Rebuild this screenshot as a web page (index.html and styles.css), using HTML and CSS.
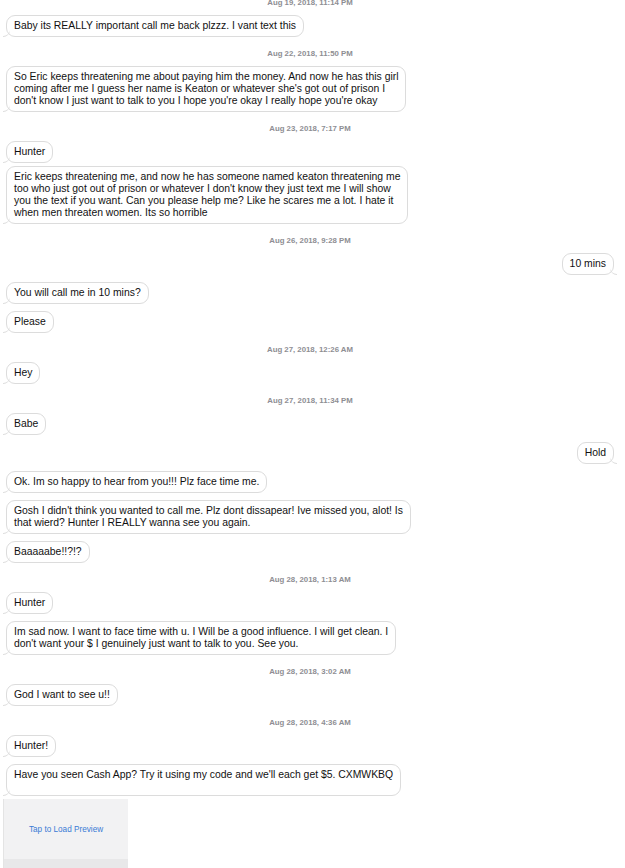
FILE: index.html
```html
<!DOCTYPE html>
<html lang="en">
<head>
    <meta charset="UTF-8">
    <meta name="viewport" content="width=device-width, initial-scale=1.0">
    <link rel="stylesheet" href="styles.css">
</head>
<body>
    <!-- Conversation -->
    <main class="chat">
        <div class="stamp">Aug 19, 2018, 11:14 PM</div>
        <div class="msg in">Baby its REALLY important call me back plzzz. I vant text this</div>

        <div class="stamp">Aug 22, 2018, 11:50 PM</div>
        <div class="msg in">So Eric keeps threatening me about paying him the money. And now he has this girl<br>coming after me I guess her name is Keaton or whatever she's got out of prison I<br>don't know I just want to talk to you I hope you're okay I really hope you're okay</div>

        <div class="stamp">Aug 23, 2018, 7:17 PM</div>
        <div class="msg in">Hunter</div>
        <div class="msg in tight">Eric keeps threatening me, and now he has someone named keaton threatening me<br>too who just got out of prison or whatever I don't know they just text me I will show<br>you the text if you want. Can you please help me? Like he scares me a lot. I hate it<br>when men threaten women. Its so horrible</div>

        <div class="stamp">Aug 26, 2018, 9:28 PM</div>
        <div class="msg out">10 mins</div>
        <div class="msg in">You will call me in 10 mins?</div>
        <div class="msg in">Please</div>

        <div class="stamp">Aug 27, 2018, 12:26 AM</div>
        <div class="msg in">Hey</div>

        <div class="stamp">Aug 27, 2018, 11:34 PM</div>
        <div class="msg in">Babe</div>
        <div class="msg out">Hold</div>
        <div class="msg in">Ok. Im so happy to hear from you!!! Plz face time me.</div>
        <div class="msg in">Gosh I didn't think you wanted to call me. Plz dont dissapear! Ive missed you, alot! Is<br>that wierd? Hunter I REALLY wanna see you again.</div>
        <div class="msg in">Baaaaabe!!?!?</div>

        <div class="stamp">Aug 28, 2018, 1:13 AM</div>
        <div class="msg in">Hunter</div>
        <div class="msg in">Im sad now. I want to face time with u. I Will be a good influence. I will get clean. I<br>don't want your $ I genuinely just want to talk to you. See you.</div>

        <div class="stamp">Aug 28, 2018, 3:02 AM</div>
        <div class="msg in">God I want to see u!!</div>

        <div class="stamp">Aug 28, 2018, 4:36 AM</div>
        <div class="msg in">Hunter!</div>
        <div class="msg in link">Have you seen Cash App? Try it using my code and we'll each get $5. CXMWKBQ</div>

        <!-- Link preview -->
        <div class="preview">
            <div class="preview-body">Tap to Load Preview</div>
            <div class="preview-foot"></div>
        </div>
    </main>
</body>
</html>
```

FILE: styles.css
```css
/* Reset */
* {
    margin: 0;
    padding: 0;
    box-sizing: border-box;
}

body {
    font-family: "Liberation Sans", Arial, sans-serif;
    background-color: #fff;
    color: #111;
    overflow: hidden;
}

/* Chat column */
.chat {
    display: flex;
    flex-direction: column;
    align-items: flex-start;
    padding: 0 11px 0 6px;
}

.stamp {
    align-self: center;
    margin-top: 12px;
    font-size: 7.8px;
    line-height: 10px;
    color: #8e8e93;
    font-weight: bold;
}

.stamp:first-child {
    margin-top: -2px;
}

/* Bubbles */
.msg {
    position: relative;
    margin-top: 7px;
    padding: 4px 7px;
    font-size: 10.4px;
    line-height: 12px;
    white-space: nowrap;
    background-color: #fff;
    border: 1px solid #dcdcdc;
    border-radius: 9px;
}

.msg::before {
    content: "";
    position: absolute;
    bottom: -1px;
    width: 7px;
    height: 7px;
    border-bottom: 1px solid #dcdcdc;
}

.msg.in::before {
    left: -4px;
    border-bottom-right-radius: 7px;
}

.msg.out {
    align-self: flex-end;
}

.msg.out::before {
    right: -4px;
    border-bottom-left-radius: 7px;
}

.msg.tight {
    margin-top: 3px;
}

.msg.link {
    padding-bottom: 14px;
}

/* Preview card */
.preview {
    margin: 3px 0 0 -3px;
    width: 125px;
    background-color: #f2f2f3;
    border-left: 1px solid #e4e4e4;
}

.preview-body {
    height: 60px;
    display: flex;
    align-items: center;
    justify-content: center;
    font-size: 8.2px;
    color: #3a7bd5;
}

.preview-foot {
    height: 12px;
    background-color: #e8e8e9;
}
```
